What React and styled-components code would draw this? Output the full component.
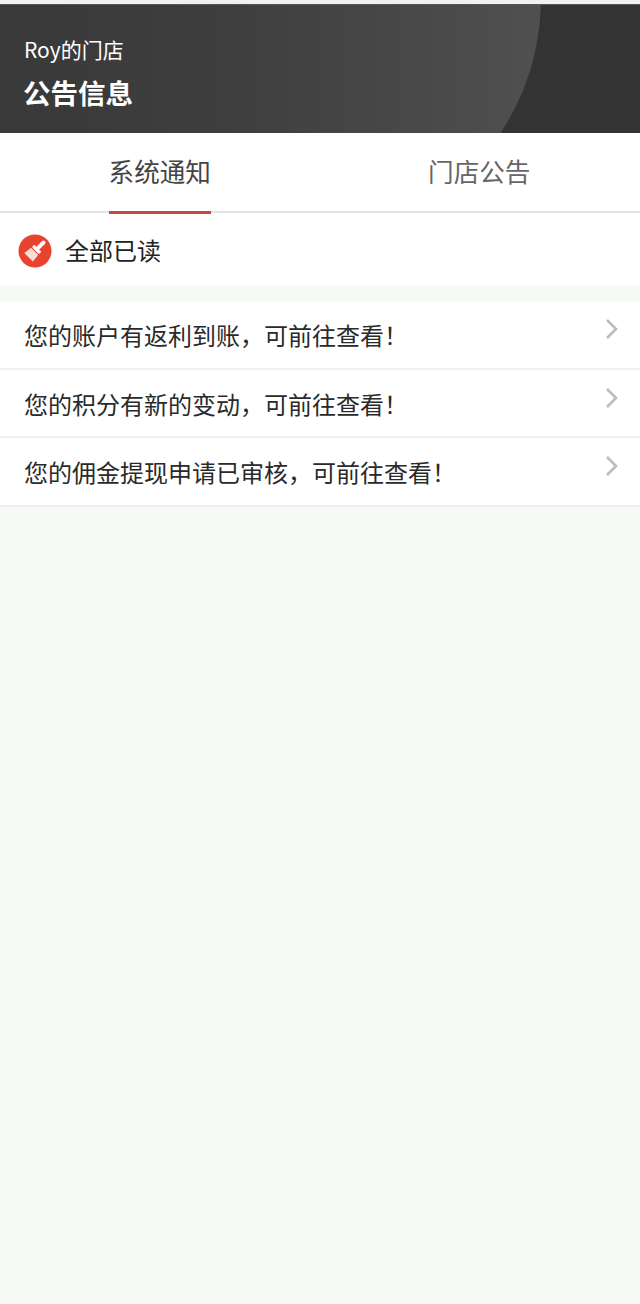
import React, { useState } from 'react'
import styled, { createGlobalStyle } from 'styled-components'

const GlobalStyle = createGlobalStyle`
  html, body {
    margin: 0;
    padding: 0;
    background: #f7f9f7;
    font-family: "Noto Sans CJK SC", "Noto Sans", sans-serif;
  }
`

const Page = styled.div`
  min-height: 1304px;
  background: #f7f9f7;
  border-top: 4px solid #f1f1f1;
  box-sizing: border-box;
`

const Header = styled.header`
  position: relative;
  overflow: hidden;
  height: 129px;
  padding: 32px 24px 0;
  box-sizing: border-box;
  background: linear-gradient(90deg, #3a3a3a 480px, #333 480px);
  border-top: 1px solid #555;
  color: #fff;

  &::before {
    content: '';
    position: absolute;
    left: 49px;
    top: -253px;
    width: 492px;
    height: 492px;
    border-radius: 50%;
    background: linear-gradient(90deg, #3a3a3a 0%, #3f3f3f 40%, #505050 100%);
  }
`

const Shop = styled.div`
  position: relative;
  font-size: 21px;
  line-height: 24px;
`

const Title = styled.h1`
  position: relative;
  margin: 13px 0 0 -1px;
  font-size: 27.5px;
  line-height: 36px;
  font-weight: 700;
`

const Tabs = styled.nav`
  display: flex;
  height: 80px;
  padding-right: 1px;
  background: #fff;
  border-bottom: 2px solid #e4e4e4;
  box-sizing: border-box;
`

const Tab = styled.div`
  flex: 1;
  display: flex;
  justify-content: center;
`

const TabLabel = styled.span`
  height: 81px;
  box-sizing: border-box;
  padding-top: 19px;
  font-size: 25.6px;
  line-height: 38px;
  color: ${(p) => (p.$active ? '#444' : '#666')};
  border-bottom: ${(p) => (p.$active ? '3px solid #c9483c' : 'none')};
  cursor: pointer;
`

const ReadBar = styled.div`
  display: flex;
  align-items: center;
  gap: 13px;
  height: 72px;
  padding-left: 18px;
  background: #fff;
  font-size: 24px;
  color: #222;
`

const IconWrap = styled.span`
  display: flex;
  margin-top: 4px;
`

const List = styled.ul`
  list-style: none;
  margin: 16px 0 0;
  padding: 0;
  background: #fff;
`

const Row = styled.li`
  display: flex;
  justify-content: space-between;
  height: 68.5px;
  box-sizing: border-box;
  padding: 16px 20px 0 24px;
  border-bottom: 2px solid #f0f0f0;
  font-size: 24px;
  line-height: 36px;
  color: #2a2a2a;
`

const Chevron = styled.svg`
  width: 16px;
  height: 22px;
  flex: none;
  margin-top: 1px;
  fill: none;
  stroke: #bcbcbc;
  stroke-width: 2.6;
`

const BrushIcon = () => (
  <svg width="34" height="34" viewBox="0 0 34 34">
    <circle cx="17" cy="17" r="16.5" fill="#e8432f" />
    <g transform="rotate(45 17 17)">
      <rect x="15" y="3" width="4" height="10.500" rx="2" fill="#fff" />
      <rect x="12" y="13" width="10" height="3.500" rx="1" fill="#fff" />
      <path d="M12 17.500h10l1 8.500h-12z" fill="#f8ddd7" />
    </g>
  </svg>
)

const messages = [
  '您的账户有返利到账，可前往查看！',
  '您的积分有新的变动，可前往查看！',
  '您的佣金提现申请已审核，可前往查看！',
]

export default function App() {
  const [tab, setTab] = useState(0)

  return (
    <Page>
      <GlobalStyle />
      <Header>
        <Shop>Roy的门店</Shop>
        <Title>公告信息</Title>
      </Header>
      <Tabs>
        {['系统通知', '门店公告'].map((name, i) => (
          <Tab key={name} onClick={() => setTab(i)}>
            <TabLabel $active={tab === i}>{name}</TabLabel>
          </Tab>
        ))}
      </Tabs>
      <ReadBar>
        <IconWrap>
          <BrushIcon />
        </IconWrap>
        全部已读
      </ReadBar>
      <List>
        {messages.map((text) => (
          <Row key={text}>
            {text}
            <Chevron viewBox="0 0 16 22">
              <path d="M3 2l9 9-9 9" />
            </Chevron>
          </Row>
        ))}
      </List>
    </Page>
  )
}
